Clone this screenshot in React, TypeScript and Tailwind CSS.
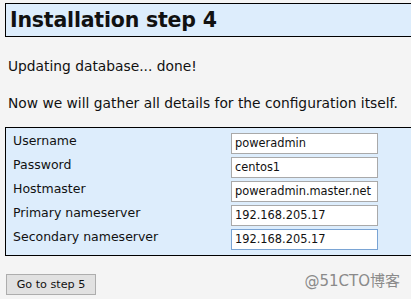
export default function App() {
  const rows = [
    { label: "Username", value: "poweradmin" },
    { label: "Password", value: "centos1" },
    { label: "Hostmaster", value: "poweradmin.master.net" },
    { label: "Primary nameserver", value: "192.168.205.17" },
    { label: "Secondary nameserver", value: "192.168.205.17", focused: true },
  ];

  return (
    <div
      className="w-[411px] h-[299px] overflow-hidden bg-[#f4f4f4] text-[#111] pt-[3px] pl-[5px]"
      style={{ fontFamily: '"DejaVu Sans", Verdana, sans-serif' }}
    >
      <div className="h-[34px] w-[410px] border border-black bg-[#ddedfc] pl-[4px] flex items-center">
        <h1 className="text-[20.5px] font-bold tracking-[-0.2px] leading-none mt-[1px]">Installation step 4</h1>
      </div>

      <p className="mt-[21px] pl-[3px] text-[13.8px] leading-[17px]">Updating database... done!</p>
      <p className="mt-[20px] pl-[3px] text-[13.8px] leading-[17px]">
        Now we will gather all details for the configuration itself.
      </p>

      <div className="mt-[15px] w-[410px] h-[129px] border border-black bg-[#ddedfc] pt-[5px] pl-[7px] flex flex-col gap-[3px]">
        {rows.map((r) => (
          <div key={r.label} className="flex h-[21px]">
            <div className="w-[218px] text-[12.5px] leading-[14px] pt-[1px]">{r.label}</div>
            <div
              className={`w-[147px] h-[21px] bg-white border pl-[3px] flex items-center leading-none text-[11.4px] ${
                r.focused ? "border-[#7aa4d4]" : "border-[#a9a9a9]"
              }`}
            >
              {r.value}
            </div>
          </div>
        ))}
      </div>

      <div className="mt-[18px] flex items-center justify-between pr-[11px]">
        <button className="ml-[1px] w-[90px] h-[21px] bg-[#e1e1e1] border border-[#adadad] text-[11.2px] leading-none text-[#111]">
          Go to step 5
        </button>
        <span
          className="text-[15px] text-[#8a8a8a] -mt-[6px]"
          style={{ fontFamily: '"DejaVu Sans", "Noto Sans CJK SC", sans-serif' }}
        >
          @51CTO博客
        </span>
      </div>
    </div>
  );
}
